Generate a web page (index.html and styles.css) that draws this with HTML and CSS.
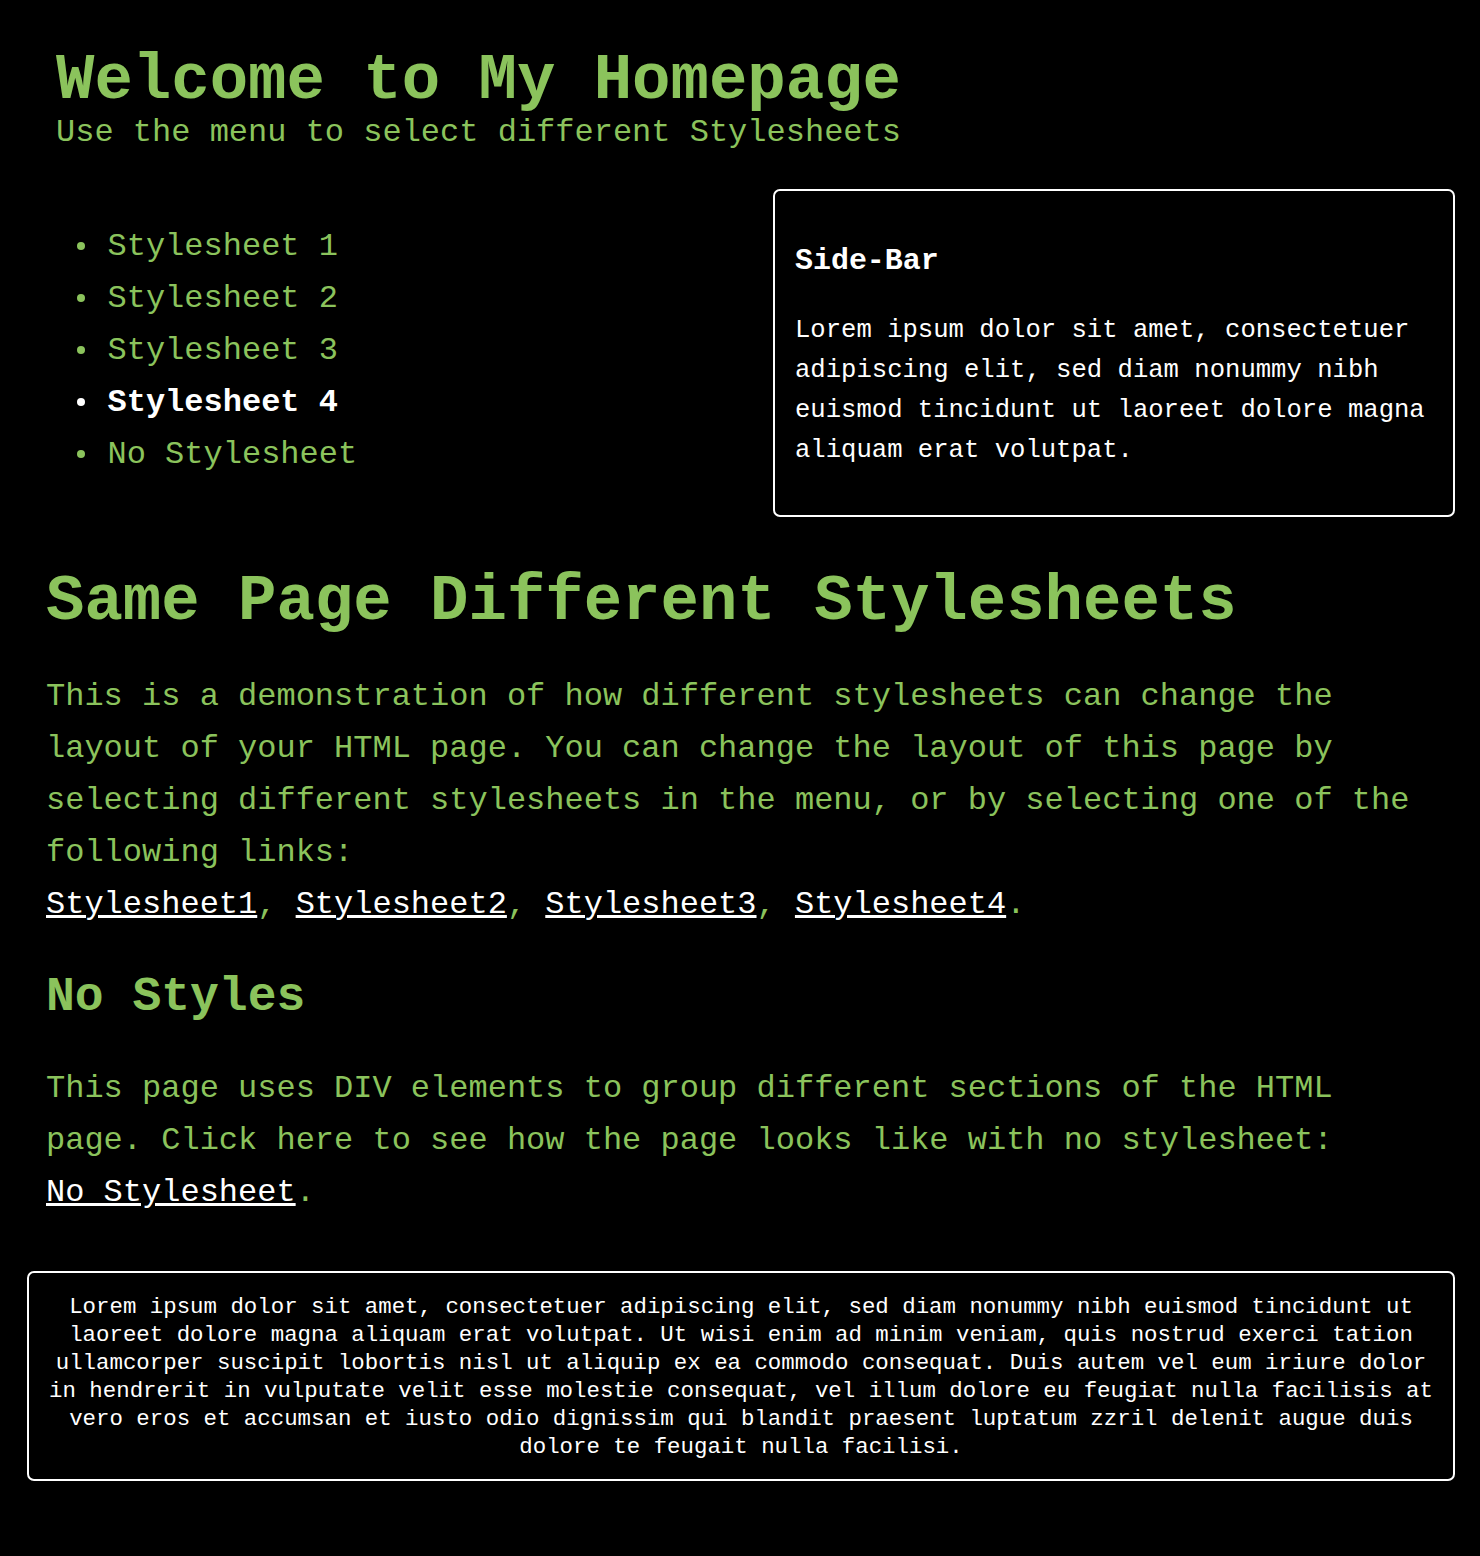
FILE: index.html
```html
<!DOCTYPE html>
<html lang="en">
<head>
<meta charset="utf-8">
<title>Welcome to My Homepage</title>
<link rel="stylesheet" href="styles.css">
</head>
<body>
<div class="page">
  <div class="header">
    <h1 class="site-title">Welcome to My Homepage</h1>
    <p class="tagline">Use the menu to select different Stylesheets</p>
  </div>

  <div class="row">
    <ul class="menu">
      <li><a href="#">Stylesheet 1</a></li>
      <li><a href="#">Stylesheet 2</a></li>
      <li><a href="#">Stylesheet 3</a></li>
      <li class="active"><a href="#">Stylesheet 4</a></li>
      <li><a href="#">No Stylesheet</a></li>
    </ul>

    <div class="sidebar">
      <h3 class="sidebar-title">Side-Bar</h3>
      <p class="sidebar-text">Lorem ipsum dolor sit amet, consectetuer adipiscing elit, sed diam nonummy nibh euismod tincidunt ut laoreet dolore magna aliquam erat volutpat.</p>
    </div>
  </div>

  <div class="main">
    <h1 class="main-title">Same Page Different Stylesheets</h1>
    <p class="text first">This is a demonstration of how different stylesheets can change the layout of your HTML page. You can change the layout of this page by selecting different stylesheets in the menu, or by selecting one of the following links:<br><a class="link" href="#">Stylesheet1</a>, <a class="link" href="#">Stylesheet2</a>, <a class="link" href="#">Stylesheet3</a>, <a class="link" href="#">Stylesheet4</a>.</p>
    <h2 class="sub-title">No Styles</h2>
    <p class="text second">This page uses DIV elements to group different sections of the HTML page. Click here to see how the page looks like with no stylesheet:<br><a class="link" href="#">No Stylesheet</a>.</p>
  </div>

  <div class="footer">Lorem ipsum dolor sit amet, consectetuer adipiscing elit, sed diam nonummy nibh euismod tincidunt ut laoreet dolore magna aliquam erat volutpat. Ut wisi enim ad minim veniam, quis nostrud exerci tation ullamcorper suscipit lobortis nisl ut aliquip ex ea commodo consequat. Duis autem vel eum iriure dolor in hendrerit in vulputate velit esse molestie consequat, vel illum dolore eu feugiat nulla facilisis at vero eros et accumsan et iusto odio dignissim qui blandit praesent luptatum zzril delenit augue duis dolore te feugait nulla facilisi.</div>
</div>
</body>
</html>
```

FILE: styles.css
```css
html, body {
  background: #000;
}

body {
  margin: 0;
  color: #8bc35c;
  font-family: "Liberation Mono", "Courier New", monospace;
}

.page {
  padding: 0 25px 75px 27px;
}

/* Header */
.header {
  padding: 49px 0 0 29px;
}

.site-title {
  margin: 0;
  font-size: 64px;
  line-height: 64px;
  font-weight: bold;
}

.tagline {
  margin: 0;
  font-size: 32px;
  line-height: 40px;
}

/* Menu + sidebar row */
.row {
  display: flex;
  align-items: flex-start;
  margin-top: 36px;
}

.menu {
  flex: 1;
  list-style: none;
  margin: 31.5px 0 0;
  padding: 0 0 0 49.5px;
}

.menu li {
  font-size: 32px;
  line-height: 52px;
  white-space: nowrap;
}

.menu li::before {
  content: "";
  display: inline-block;
  width: 8px;
  height: 8px;
  border-radius: 50%;
  background: currentColor;
  margin-right: 23px;
  vertical-align: 4.5px;
}

.menu a {
  color: inherit;
  text-decoration: none;
}

.menu li.active {
  color: #fff;
  font-weight: bold;
}

.sidebar {
  width: 682px;
  flex: none;
  box-sizing: border-box;
  border: 2px solid #fff;
  border-radius: 7px;
  padding: 0 20px;
  color: #fff;
}

.sidebar-title {
  margin: 49.7px 0 0;
  font-size: 29.95px;
  line-height: 40px;
  font-weight: bold;
}

.sidebar-text {
  margin: 30.3px 0 43.7px;
  font-size: 25.6px;
  line-height: 40px;
}

/* Main */
.main {
  margin: 0 19px;
}

.main-title {
  margin: 53.2px 0 0;
  font-size: 64px;
  line-height: 64px;
  font-weight: bold;
}

.text {
  font-size: 32px;
  line-height: 52px;
  margin: 0;
}

.text.first {
  margin-top: 36.8px;
}

.sub-title {
  margin: 42px 0 0;
  font-size: 48px;
  line-height: 48px;
  font-weight: bold;
}

.text.second {
  margin-top: 42.5px;
}

.link {
  color: #fff;
  text-decoration: underline;
}

/* Footer */
.footer {
  margin-top: 51.5px;
  border: 2px solid #fff;
  border-radius: 7px;
  padding: 20px 10px 18px;
  text-align: center;
  font-size: 22.4px;
  line-height: 28px;
  color: #fff;
}
```
